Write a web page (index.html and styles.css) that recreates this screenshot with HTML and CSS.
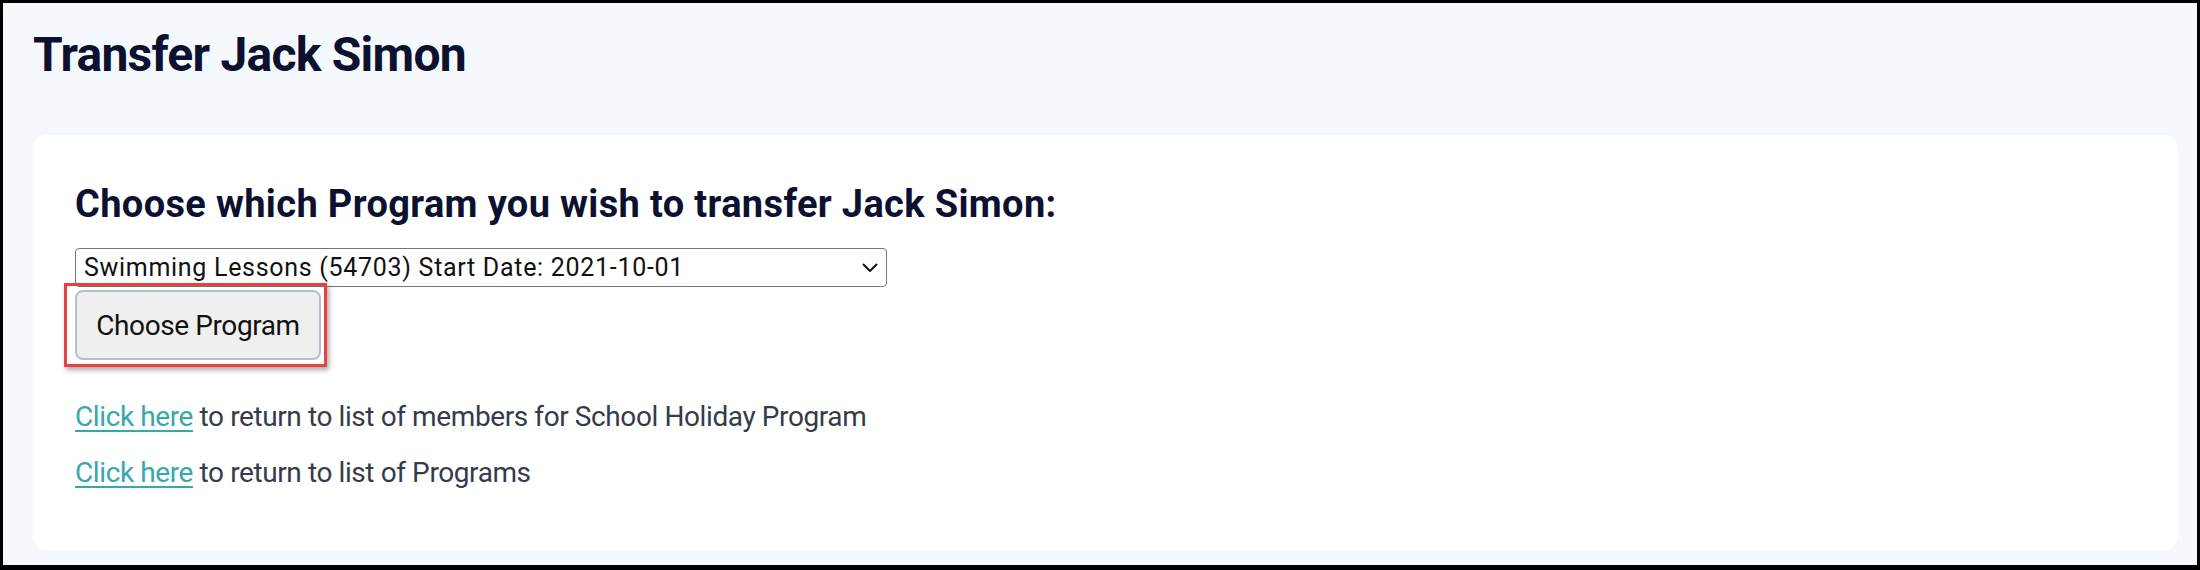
FILE: index.html
```html
<!DOCTYPE html>
<html lang="en">
<head>
<meta charset="utf-8">
<title>Transfer Jack Simon</title>
<link rel="stylesheet" href="styles.css">
</head>
<body>
<div class="frame">
  <header class="page-head">
    <h1 class="page-title">Transfer Jack Simon</h1>
  </header>
  <main class="card">
    <h2 class="card-title">Choose which Program you wish to transfer Jack Simon:</h2>
    <div class="select-wrap">
      <select class="program-select">
        <option>Swimming Lessons (54703) Start Date: 2021-10-01</option>
      </select>
      <svg class="chevron" width="16" height="9" viewBox="0 0 16 9" aria-hidden="true"><path d="M1 1 L8 8 L15 1" fill="none" stroke="#111" stroke-width="2"/></svg>
    </div>
    <div class="btn-wrap">
      <button class="btn" type="button">Choose Program</button>
      <span class="highlight"></span>
    </div>
    <p class="back-link"><a href="#">Click here</a> to return to list of members for School Holiday Program</p>
    <p class="back-link"><a href="#">Click here</a> to return to list of Programs</p>
  </main>
</div>
</body>
</html>
```
FILE: styles.css
```css
html, body {
  margin: 0;
  padding: 0;
  background: #000;
}
.frame {
  box-sizing: border-box;
  width: 2200px;
  height: 570px;
  border: 3px solid #000;
  border-bottom-width: 5px;
  background: #f5f9fd;
  padding: 24px 19px 15px 30px;
  display: flex;
  flex-direction: column;
  font-family: Roboto, "Liberation Sans", sans-serif;
}
.page-head {
  height: 56px;
  margin-bottom: 52px;
}
.page-title {
  margin: 0;
  padding-left: 0;
  font-size: 48px;
  line-height: 56px;
  font-weight: 700;
  color: #0c1130;
  letter-spacing: -0.75px;
}
.card {
  background: #fff;
  border-radius: 14px;
  padding: 46px 42px 49px 42px;
  flex: 1;
  display: flex;
  flex-direction: column;
  align-items: flex-start;
}
.card-title {
  margin: 0 0 21px 0;
  font-size: 38px;
  line-height: 46px;
  font-weight: 700;
  color: #0c1130;
  letter-spacing: 0.35px;
}
.select-wrap {
  position: relative;
  width: 812px;
  height: 39px;
}
.program-select {
  -webkit-appearance: none;
  appearance: none;
  box-sizing: border-box;
  width: 100%;
  height: 39px;
  margin: 0;
  padding: 0 40px 0 8px;
  border: 1.5px solid #767676;
  border-radius: 4px;
  background: #fff;
  font-family: Roboto, "Liberation Sans", sans-serif;
  font-size: 25px;
  color: #111;
  letter-spacing: 0.7px;
}
.chevron {
  position: absolute;
  right: 9px;
  top: 15px;
  pointer-events: none;
}
.btn-wrap {
  position: relative;
  margin-top: 3px;
}
.btn {
  box-sizing: border-box;
  width: 246px;
  height: 70px;
  margin: 0;
  padding: 0;
  border: 2px solid #b4bfce;
  border-radius: 8px;
  background: #efefef;
  font-family: Roboto, "Liberation Sans", sans-serif;
  font-size: 28px;
  color: #111;
  letter-spacing: -0.4px;
  display: block;
}
.highlight {
  position: absolute;
  left: -11px;
  top: -7px;
  right: -6px;
  bottom: -7px;
  border: 3px solid #e8413f;
  box-shadow: 2px 3px 5px rgba(0, 0, 0, 0.35);
  pointer-events: none;
}
.back-link {
  margin: 0;
  font-size: 28px;
  line-height: 56px;
  color: #353b4b;
  letter-spacing: -0.4px;
}
.btn-wrap + .back-link {
  margin-top: 29px;
}
.back-link a {
  color: #37a8aa;
  text-decoration: underline;
  text-decoration-thickness: 2px;
  text-underline-offset: 4px;
}
```
